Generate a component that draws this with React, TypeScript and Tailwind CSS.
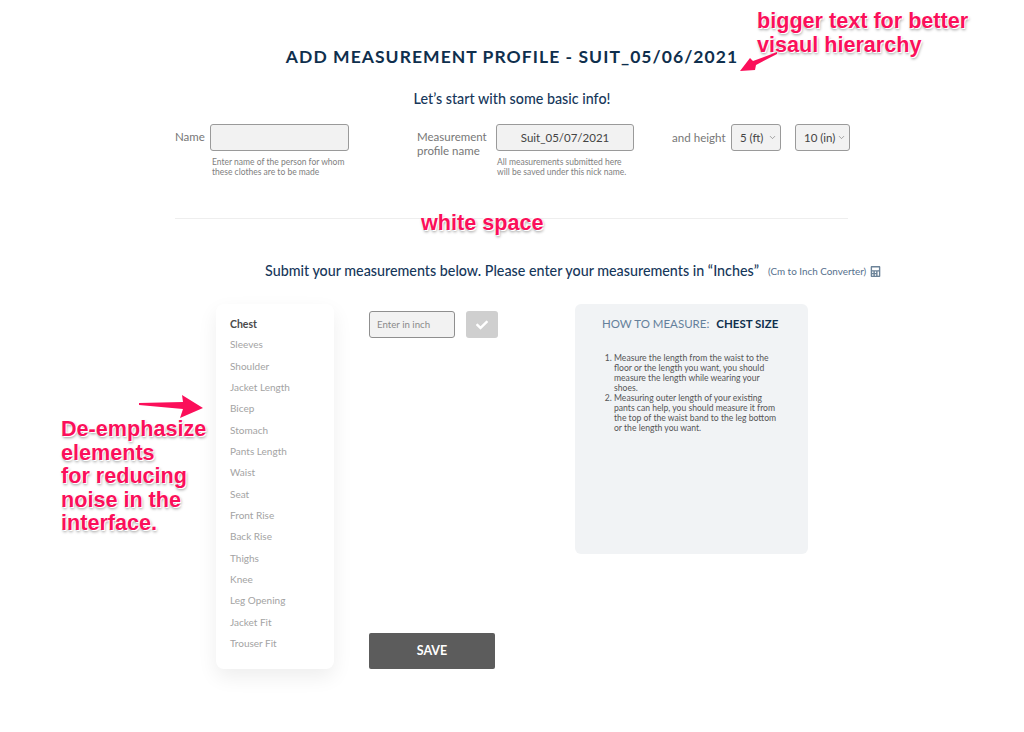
import React from "react";
import { FaCheck, FaCalculator } from "react-icons/fa";
import { ChevronDown } from "lucide-react";

const items = ["Sleeves","Shoulder","Jacket Length","Bicep","Stomach","Pants Length","Waist","Seat","Front Rise","Back Rise","Thighs","Knee","Leg Opening","Jacket Fit","Trouser Fit"];

function Sel({ label, w }: { label: string; w: string }) {
  return (
    <div className={`${w} h-[27px] flex items-center justify-between pl-[8px] pr-[3px] bg-[#f2f2f2] border border-[#9a9a9a] rounded-[3px] text-[11.5px] text-[#444] whitespace-nowrap`}>
      <span>{label}</span>
      <ChevronDown size={9} className="text-[#888]" />
    </div>
  );
}

const ann = "absolute font-['Liberation_Sans',sans-serif] font-bold text-[#fb0f5a] text-[21.6px] whitespace-nowrap [text-shadow:1px_1px_0_#fff,-1px_-1px_0_#fff,1px_2px_3px_rgba(0,0,0,0.4)]";

export default function App() {
  return (
    <div className="relative w-[1024px] h-[732px] overflow-hidden bg-white font-['Lato',sans-serif]">
      <h1 className="pt-[46px] text-center text-[17.5px] leading-[22px] font-bold tracking-[1.05px] text-[#0f2f4d]">ADD MEASUREMENT PROFILE - SUIT_05/06/2021</h1>
      <p className="mt-[21px] text-center text-[14.3px] leading-[20px] font-medium text-[#16375a]">Let’s start with some basic info!</p>

      <div className="mt-[15px] ml-[175px] flex items-start">
        <span className="w-[35px] mt-[5px] text-[11.5px] leading-[16px] text-[#777]">Name</span>
        <div className="w-[139px]">
          <div className="h-[27px] bg-[#f2f2f2] border border-[#9a9a9a] rounded-[3px]" />
          <p className="mt-[6px] ml-[2px] w-[150px] text-[8.5px] leading-[10px] text-[#808080] whitespace-nowrap">Enter name of the person for whom<br />these clothes are to be made</p>
        </div>
        <span className="ml-[68px] w-[79px] mt-[6px] text-[11.5px] leading-[14px] text-[#777]">Measurement<br />profile name</span>
        <div className="w-[138px]">
          <div className="h-[27px] flex items-center justify-center bg-[#f2f2f2] border border-[#9a9a9a] rounded-[3px] text-[11.5px] text-[#444]">Suit_05/07/2021</div>
          <p className="mt-[6px] ml-[1px] text-[8.5px] leading-[10px] text-[#808080] whitespace-nowrap">All measurements submitted here<br />will be saved under this nick name.</p>
        </div>
        <span className="ml-[38px] w-[59px] mt-[6px] text-[11.6px] leading-[16px] text-[#777] whitespace-nowrap">and height</span>
        <Sel label="5 (ft)" w="w-[50px]" />
        <div className="w-[14px]" />
        <Sel label="10 (in)" w="w-[55px]" />
      </div>

      <div className="mt-[41px] ml-[175px] w-[673px] h-px bg-[#eeeeee]" />

      <div className="mt-[42px] ml-[265px] flex items-center h-[20px]">
        <span className="text-[14.3px] font-medium text-[#16375a] whitespace-nowrap">Submit your measurements below. Please enter your measurements in “Inches”</span>
        <span className="ml-[9px] text-[9.9px] text-[#55708c] whitespace-nowrap">(Cm to Inch Converter)</span>
        <FaCalculator size={11} className="ml-[4px] text-[#6c8398]" />
      </div>

      <div className="mt-[23px] ml-[216px] flex items-start">
        <div className="w-[118px] h-[365px] bg-white rounded-[8px] shadow-[0_8px_20px_rgba(0,0,0,0.07)] pt-[13px] pl-[14px]">
          <div className="text-[10.5px] leading-[14px] font-bold text-[#4a4a4a]">Chest</div>
          <div className="mt-[3px]">
            {items.map((t) => (
              <div key={t} className="h-[21.35px] flex items-center text-[10px] text-[#a3a3a3] whitespace-nowrap">{t}</div>
            ))}
          </div>
        </div>

        <div className="ml-[35px] w-[206px] h-[365px] flex flex-col justify-between pt-[7px]">
          <div className="flex">
            <div className="w-[86px] h-[27px] flex items-center pl-[7px] bg-[#f2f2f2] border border-[#8f8f8f] rounded-[3px] text-[9.7px] text-[#8a8a8a]">Enter in inch</div>
            <div className="ml-[11px] w-[32px] h-[27px] flex items-center justify-center bg-[#cfcfcf] rounded-[3px]"><FaCheck size={12} className="text-white" /></div>
          </div>
          <div className="w-[126px] h-[36px] flex items-center justify-center bg-[#5c5c5c] rounded-[2px] text-[12.5px] font-bold text-white">SAVE</div>
        </div>

        <div className="w-[233px] h-[250px] bg-[#f1f3f5] rounded-[6px] pt-[13px] pl-[27px]">
          <div className="flex items-center h-[14px] text-[11.5px] whitespace-nowrap">
            <span className="text-[#64809b]">HOW TO MEASURE:</span>
            <span className="ml-[7px] font-bold text-[#0f2f4d]">CHEST SIZE</span>
          </div>
          <ol className="mt-[22px] ml-[2px] w-[180px] text-[8.6px] leading-[10px] text-[#555] list-decimal pl-[10px]">
            <li>Measure the length from the waist to the floor or the length you want, you should measure the length while wearing your shoes.</li>
            <li>Measuring outer length of your existing pants can help, you should measure it from the top of the waist band to the leg bottom or the length you want.</li>
          </ol>
        </div>
      </div>

      <div className={`${ann} left-[757px] top-[9px] leading-[23.5px]`}>bigger text for better<br />visaul hierarchy</div>
      <div className={`${ann} left-[421px] top-[211px] leading-[24px]`}>white space</div>
      <div className={`${ann} left-[61px] top-[417px] leading-[23.5px]`}>De-emphasize<br />elements<br />for reducing<br />noise in the<br />interface.</div>

      <svg className="absolute left-[735px] top-[50px]" width="45" height="24" viewBox="0 0 45 24"><path d="M5 21 L15 8 L18 11 L42 2 L42 4 L21 15 L20 20 Z" fill="#fb0f5a" /></svg>
      <svg className="absolute left-[135px] top-[392px]" width="72" height="30" viewBox="0 0 72 30"><path d="M4 11 L48 10 L47 3 L68 16 L45 26 L48 17 L4 13 Z" fill="#fb0f5a" /></svg>
    </div>
  );
}
